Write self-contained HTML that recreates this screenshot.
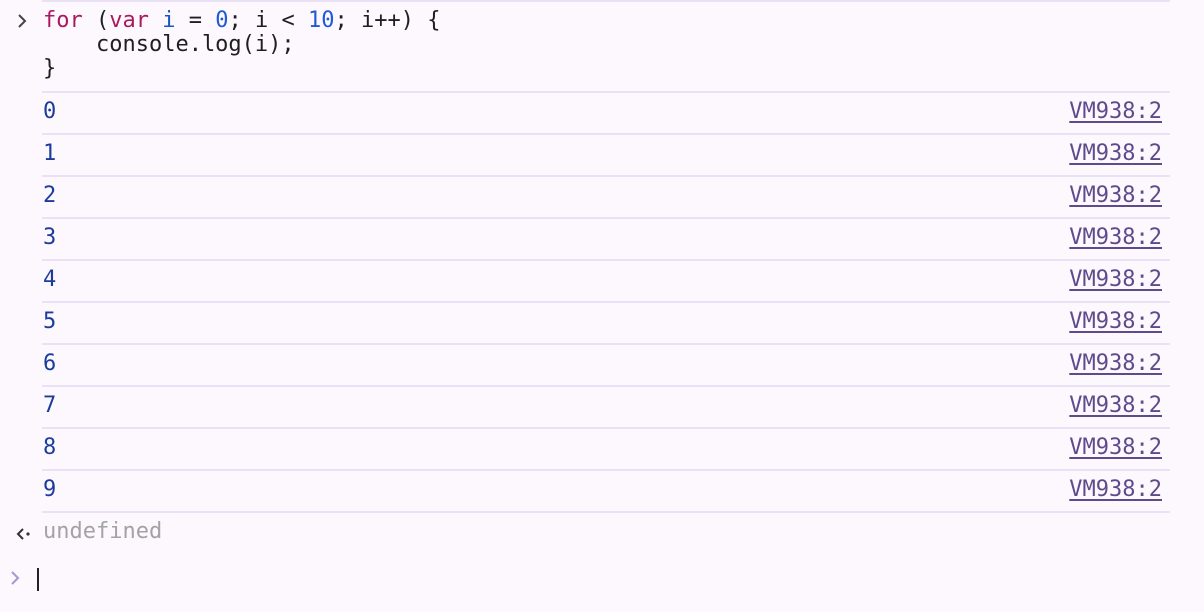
<!DOCTYPE html>
<html><head><style>
body{margin:0;width:1204px;height:612px;background:#fcf8fe;font-family:"DejaVu Sans Mono","Liberation Mono",monospace;font-size:22px;overflow:hidden;position:relative;color:#1f1f1f}
.sep{position:absolute;left:42px;width:1128px;height:2px;background:#ebe1f6}
.t{position:absolute;left:43px;line-height:24px;white-space:pre}
.n{color:#1b3c9c}
.l{position:absolute;right:42px;color:#5f4a8c;text-decoration:underline;text-underline-offset:3px;line-height:24px}
.k{color:#aa1a5e}.v{color:#1d54c4}.d{color:#1f5ad6}
</style></head><body>
<div class="sep" style="top:0"></div>
<svg style="position:absolute;left:16px;top:13px" width="14" height="16"><path d="M3 2l6 6-6 6" stroke="#444" stroke-width="2" fill="none"/></svg>
<div class="t" style="top:9px"><span class="k">for</span> (<span class="k">var</span> <span class="v">i</span> = <span class="d">0</span>; i &lt; <span class="d">10</span>; i++) {
    console.log(i);
}</div>
<div class="sep" style="top:91px"></div>
<div class="t n" style="top:100px">0</div><div class="l" style="top:100px">VM938:2</div><div class="sep" style="top:133px"></div>
<div class="t n" style="top:142px">1</div><div class="l" style="top:142px">VM938:2</div><div class="sep" style="top:175px"></div>
<div class="t n" style="top:184px">2</div><div class="l" style="top:184px">VM938:2</div><div class="sep" style="top:217px"></div>
<div class="t n" style="top:226px">3</div><div class="l" style="top:226px">VM938:2</div><div class="sep" style="top:259px"></div>
<div class="t n" style="top:268px">4</div><div class="l" style="top:268px">VM938:2</div><div class="sep" style="top:301px"></div>
<div class="t n" style="top:310px">5</div><div class="l" style="top:310px">VM938:2</div><div class="sep" style="top:343px"></div>
<div class="t n" style="top:352px">6</div><div class="l" style="top:352px">VM938:2</div><div class="sep" style="top:385px"></div>
<div class="t n" style="top:394px">7</div><div class="l" style="top:394px">VM938:2</div><div class="sep" style="top:427px"></div>
<div class="t n" style="top:436px">8</div><div class="l" style="top:436px">VM938:2</div><div class="sep" style="top:469px"></div>
<div class="t n" style="top:478px">9</div><div class="l" style="top:478px">VM938:2</div><div class="sep" style="top:511px"></div>
<svg style="position:absolute;left:15px;top:527px" width="18" height="14"><path d="M8 2l-5 5 5 5" stroke="#333" stroke-width="2" fill="none"/><circle cx="13" cy="7" r="1.6" fill="#333"/></svg>
<div class="t" style="top:520px;color:#a3a3a3">undefined</div>
<svg style="position:absolute;left:9px;top:570px" width="14" height="16"><path d="M3 2l6 6-6 6" stroke="#a996cc" stroke-width="2" fill="none"/></svg>
<div style="position:absolute;left:37px;top:568px;width:2px;height:23px;background:#222"></div>
</body></html>
